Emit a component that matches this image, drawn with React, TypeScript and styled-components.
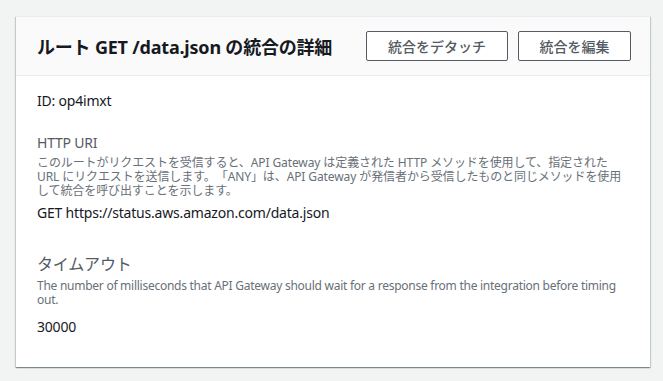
import React from 'react';
import styled, { createGlobalStyle } from 'styled-components';

const GlobalStyle = createGlobalStyle`
  html, body {
    margin: 0;
    padding: 0;
    background: #f2f3f3;
    font-family: "Noto Sans", "Noto Sans CJK JP", sans-serif;
    color: #16191f;
    text-spacing-trim: space-all;
  }
`;

export const Page = styled.div`
  padding: 16px 13px 15px 16px;
  min-height: 100vh;
  box-sizing: border-box;
`;

export const Card = styled.section`
  background: #ffffff;
  box-shadow: 0 1px 1px 0 rgba(0, 28, 36, 0.3), 1px 1px 1px 0 rgba(0, 28, 36, 0.15),
    -1px 1px 1px 0 rgba(0, 28, 36, 0.15);
  border-top: 1px solid #eaeded;
`;

export const Header = styled.header`
  display: flex;
  align-items: center;
  justify-content: space-between;
  background: #fafafa;
  border-bottom: 1px solid #eaeded;
  height: 58px;
  padding: 0 19px 0 21px;
`;

export const Title = styled.h2`
  margin: 0;
  font-size: 18px;
  font-weight: 700;
  color: #16191f;
  letter-spacing: -0.2px;
`;

export const Actions = styled.div`
  display: flex;
  gap: 10px;
`;

export const Button = styled.button<{ $width: number }>`
  width: ${p => p.$width}px;
  height: 30px;
  background: #ffffff;
  border: 1px solid #545b64;
  border-radius: 2px;
  color: #545b64;
  font-family: inherit;
  font-size: 14px;
  font-weight: 500;
  padding: 0;
  cursor: pointer;
`;

export const Body = styled.div`
  padding: 15px 21px 30px 21px;
  display: flex;
  flex-direction: column;
`;

export const Plain = styled.div`
  font-size: 14px;
  line-height: 20px;
  letter-spacing: -0.2px;
  margin-bottom: 22px;
`;

export const Field = styled.div`
  display: flex;
  flex-direction: column;
  & + & {
    margin-top: 30px;
  }
`;

export const Label = styled.div<{ $large?: boolean }>`
  font-size: ${p => (p.$large ? '16px' : '14px')};
  line-height: ${p => (p.$large ? '22px' : '20px')};
  color: #545b64;
  letter-spacing: -0.2px;
  margin-bottom: ${p => (p.$large ? '4px' : '3px')};
`;

export const Description = styled.p<{ $gap: number; $latin?: boolean }>`
  margin: 0 0 ${p => p.$gap}px;
  font-size: 12px;
  line-height: 14px;
  letter-spacing: ${p => (p.$latin ? '-0.26px' : '-0.1px')};
  color: #687078;
`;

export const Value = styled.div`
  font-size: 14px;
  line-height: 20px;
  letter-spacing: -0.2px;
  color: #16191f;
`;

export default function App() {
  return (
    <>
      <GlobalStyle />
      <Page>
        <Card>
          <Header>
            <Title>ルート GET /data.json の統合の詳細</Title>
            <Actions>
              <Button $width={142}>統合をデタッチ</Button>
              <Button $width={113}>統合を編集</Button>
            </Actions>
          </Header>
          <Body>
            <Plain>ID: op4imxt</Plain>
            <Field>
              <Label>HTTP URI</Label>
              <Description $gap={5}>
                このルートがリクエストを受信すると、API Gateway は定義された HTTP メソッドを使用して、指定された URL
                にリクエストを送信します。「ANY」は、API Gateway が発信者から受信したものと同じメソッドを使用して統合を呼び出すことを示します。
              </Description>
              <Value>GET https://status.aws.amazon.com/data.json</Value>
            </Field>
            <Field>
              <Label $large>タイムアウト</Label>
              <Description $gap={10} $latin>
                The number of milliseconds that API Gateway should wait for a response from the integration before timing
                out.
              </Description>
              <Value>30000</Value>
            </Field>
          </Body>
        </Card>
      </Page>
    </>
  );
}
